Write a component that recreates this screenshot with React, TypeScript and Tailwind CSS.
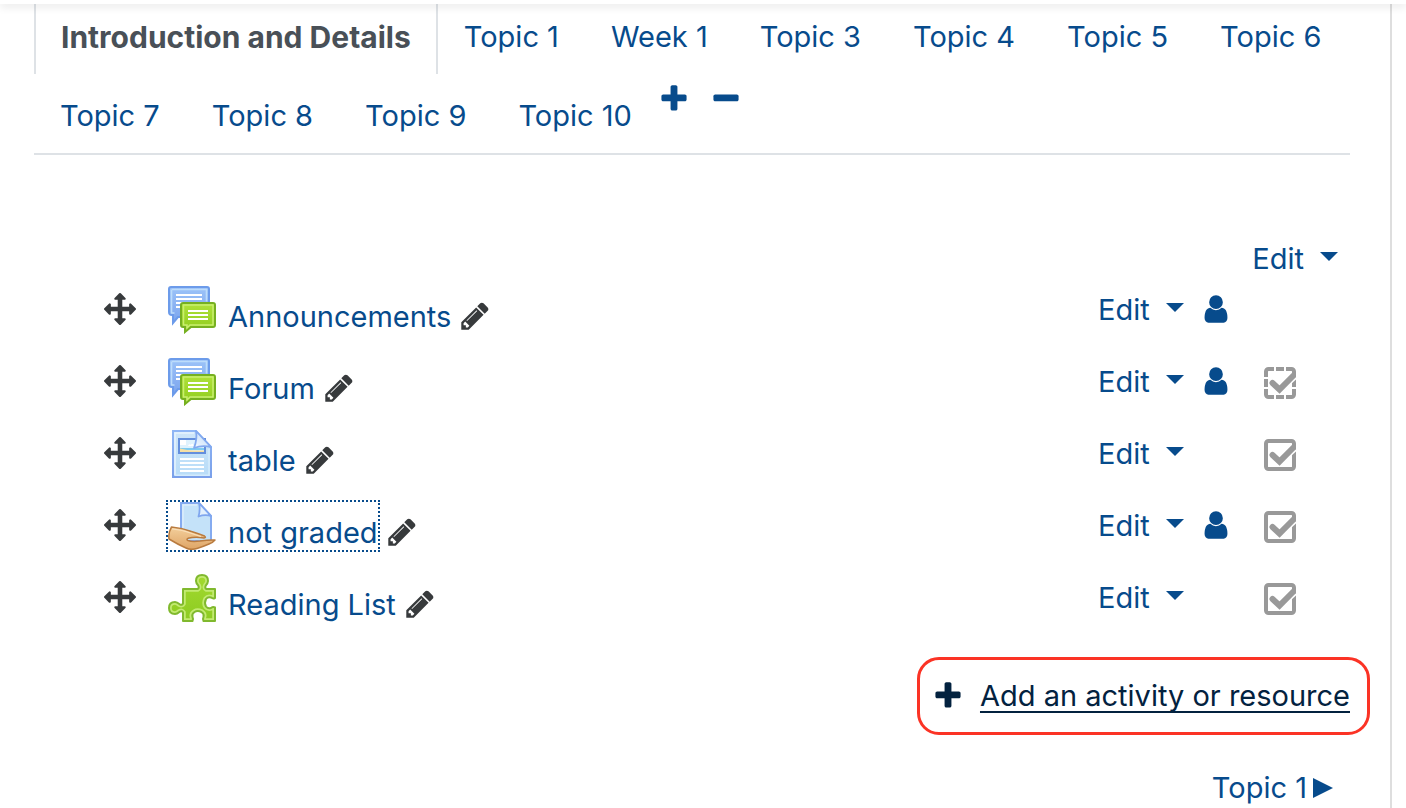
import React from 'react';

const PATHS = {
  plus: 'M1600 736v192q0 40-28 68t-68 28h-416v416q0 40-28 68t-68 28h-192q-40 0-68-28t-28-68v-416h-416q-40 0-68-28t-28-68v-192q0-40 28-68t68-28h416v-416q0-40 28-68t68-28h192q40 0 68 28t28 68v416h416q40 0 68 28t28 68z',
  minus: 'M1600 736v192q0 40-28 68t-68 28h-1216q-40 0-68-28t-28-68v-192q0-40 28-68t68-28h1216q40 0 68 28t28 68z',
  user: 'M1536 1399q0 109-62.5 187t-150.5 78h-854q-88 0-150.5-78t-62.5-187q0-85 8.5-160.5t31.5-152 58.5-131 94-89 134.5-34.5q131 128 313 128t313-128q76 0 134.5 34.5t94 89 58.5 131 31.5 152 8.5 160.5zm-256-887q0 159-112.5 271.5t-271.5 112.5-271.5-112.5-112.5-271.5 112.5-271.5 271.5-112.5 271.5 112.5 112.5 271.5z',
  pencil: 'M491 1536l91-91-235-235-91 91v107h128v128h107zm523-928q0-22-22-22-10 0-17 7l-542 542q-7 7-7 17 0 22 22 22 10 0 17-7l542-542q7-7 7-17zm-54-192l416 416-832 832h-416v-416zm683 96q0 53-37 90l-166 166-416-416 166-165q36-38 90-38 53 0 91 38l235 234q37 39 37 91z',
  move: 'M1792 896q0 26-19 45l-256 256q-19 19-45 19t-45-19-19-45v-128h-384v384h128q26 0 45 19t19 45-19 45l-256 256q-19 19-45 19t-45-19l-256-256q-19-19-19-45t19-45 45-19h128v-384h-384v128q0 26-19 45t-45 19-45-19l-256-256q-19-19-19-45t19-45l256-256q19-19 45-19t45 19 19 45v128h384v-384h-128q-26 0-45-19t-19-45 19-45l256-256q19-19 45-19t45 19l256 256q19 19 19 45t-19 45-45 19h-128v384h384v-128q0-26 19-45t45-19 45 19l256 256q19 19 19 45z',
};

function Icon({ name }: { name: keyof typeof PATHS }) {
  return (
    <svg viewBox="0 0 1792 1792" className="block size-8 shrink-0 fill-current" aria-hidden="true">
      <path d={PATHS[name]} />
    </svg>
  );
}

function ForumIcon() {
  return (
    <svg viewBox="0 0 48 48" className="block size-12 shrink-0" aria-hidden="true">
      <defs>
        <linearGradient id="forum-blue" x1="0" y1="0" x2="0" y2="1">
          <stop offset="0" stopColor="#9cc3f8" />
          <stop offset="1" stopColor="#7ba4ee" />
        </linearGradient>
        <linearGradient id="forum-green" x1="0" y1="0" x2="0" y2="1">
          <stop offset="0" stopColor="#b0e23a" />
          <stop offset="1" stopColor="#8ecb1c" />
        </linearGradient>
      </defs>
      <path d="M3 1h36q2 0 2 2v26q0 2-2 2H10l-5 6v-8H4q-3 0-3-3V3q0-2 2-2z" fill="url(#forum-blue)" stroke="#6c9bea" strokeWidth="2" />
      <path d="M4 3.500h34.500v12M3.500 3.500v23.500h3" fill="none" stroke="#bcdcfb" strokeWidth="1.600" />
      <path d="M8 9h26M8 13h26M8 17h26M8 21h26" stroke="#fff" strokeWidth="2" />
      <path d="M15 17h30q2 0 2 2v20q0 2-2 2H23l-6 5v-5h-2q-2 0-2-2V19q0-2 2-2z" fill="url(#forum-green)" stroke="#76b020" strokeWidth="2" />
      <path d="M15.500 19h29.500v20h-23l-3 3v-3h-3.500z" fill="none" stroke="#c9ee70" strokeWidth="1.500" />
      <path d="M20 25h20M20 29h20M20 33h20" stroke="#fff" strokeWidth="2" />
    </svg>
  );
}

function PageIcon() {
  return (
    <svg viewBox="0 0 48 48" className="block size-12 shrink-0" aria-hidden="true">
      <defs>
        <linearGradient id="page-fill" x1="0" y1="0" x2="0" y2="1">
          <stop offset="0" stopColor="#cfe6f9" />
          <stop offset="1" stopColor="#b7dcf8" />
        </linearGradient>
        <linearGradient id="page-edge" x1="0" y1="0" x2="0" y2="1">
          <stop offset="0" stopColor="#8fb6f5" />
          <stop offset="1" stopColor="#7aa0ea" />
        </linearGradient>
        <linearGradient id="page-fold" x1="0" y1="1" x2="1" y2="0">
          <stop offset="0" stopColor="#f4faff" />
          <stop offset="1" stopColor="#b9d6f8" />
        </linearGradient>
      </defs>
      <path d="M5 1h23l15 16v30H5z" fill="url(#page-fill)" stroke="url(#page-edge)" strokeWidth="2" />
      <path d="M7 45V3h19" fill="none" stroke="#e6f4fe" strokeWidth="1.500" />
      <path d="M7 45.300h34V19" fill="none" stroke="#d3ebfc" strokeWidth="1.500" />
      <rect x="11" y="9" width="26" height="14" fill="#dff2fd" stroke="#648fdd" strokeWidth="2" />
      <path d="M12 10h6v5h-6z" fill="#fff" />
      <path d="M20 16q1-3 3-1 1-3 3 1z" fill="#fff" />
      <path d="M12 18h24v2H12z" fill="#7fcbf0" />
      <path d="M12 18.500q9 2.500 16 2h8V22H12z" fill="#f6dfa4" />
      <path d="M28 1l15 16q-9-2-17 1 3.500-9 2-17z" fill="url(#page-fold)" stroke="#82a9ef" strokeWidth="1.800" strokeLinejoin="round" />
      <path d="M12 29h24M12 33h24M12 37h24M12 41h24" stroke="#fff" strokeWidth="2" />
    </svg>
  );
}

function AssignIcon() {
  return (
    <svg viewBox="0 0 48 48" className="block size-12 shrink-0" aria-hidden="true">
      <defs>
        <linearGradient id="assign-hand" x1="0" y1="0" x2="0" y2="1">
          <stop offset="0" stopColor="#f3cf9c" />
          <stop offset="1" stopColor="#dfa566" />
        </linearGradient>
      </defs>
      <path d="M13 1h18l12 13v25H13z" fill="#c4e2f9" stroke="#85abf0" strokeWidth="2" />
      <path d="M15 37V3h14" fill="none" stroke="#dcedfc" strokeWidth="1.500" />
      <path d="M31 1l12 13q-6-2-12.500.500 2-7 .500-13.500z" fill="#e3f0fd" stroke="#7fa6ee" strokeWidth="1.800" strokeLinejoin="round" />
      <path
        d="M3.500 25q11 1 20 4.500 8 2.500 13 4.500 2 1.500-.500 2-9-1.500-16 .300-2 1.200 0 2.200 4 1.500 12 .500 8-1.200 15-1-2 2.500-6 4-7 3-12 4.500-6 1.800-11-.500-8-3.500-17-9Q0 31 3.500 25z"
        fill="url(#assign-hand)"
        stroke="#b97b3f"
        strokeWidth="1.500"
        strokeLinejoin="round"
      />
      <path d="M4 27q10 1 17 3.500 7 2.500 12 4" fill="none" stroke="#fae1bb" strokeWidth="1.200" />
    </svg>
  );
}

function PuzzleIcon() {
  const outline =
    'M15 15h14.500q2-1 .800-3.300Q28 9 28 7q0-6 6-6t6 6q0 2-2.300 4.700Q36.500 14 38.500 15H47v9q-2 1-4-.500-3-1-5 1.500-2 4 0 7.500 2 2.500 5 1.500 2-1.500 4-.500V47H35.500q-1-2 0-4 1-3-2-5-4-2-7 0-3 2-2 5 1 2 0 4H15v-8.500q-1-2-3.300-.800Q9 40 7 40q-6 0-6-6t6-6q2 0 4.700 2.300 2.300 1.200 3.300-.800z';
  return (
    <svg viewBox="0 0 48 48" className="block size-12 shrink-0" aria-hidden="true">
      <defs>
        <linearGradient id="puzzle-fill" x1="0" y1="0" x2="0" y2="1">
          <stop offset="0" stopColor="#a3da2e" />
          <stop offset="1" stopColor="#8ccb22" />
        </linearGradient>
        <clipPath id="puzzle-clip">
          <path d={outline} />
        </clipPath>
      </defs>
      <path d={outline} fill="url(#puzzle-fill)" />
      <path d={outline} fill="none" stroke="#c3ea72" strokeWidth="5.500" clipPath="url(#puzzle-clip)" />
      <path d={outline} fill="none" stroke="#80b92e" strokeWidth="2" strokeLinejoin="round" />
    </svg>
  );
}

function CompletionBox({ dashed, label }: { dashed: boolean; label: string }) {
  return (
    <button type="button" aria-label={label} className="block">
      <svg viewBox="0 0 32 32" className="block size-8" aria-hidden="true">
        <rect x="2" y="2" width="28" height="28" rx="2.500" fill="none" stroke="#999" strokeWidth="4" />
        {dashed && (
          <path d="M11 0v4M21 0v4M11 28v4M21 28v4M0 11h4M0 21h4M28 11h4M28 21h4" stroke="#fff" strokeWidth="2" />
        )}
        <path d="M15.500 22L30 8.500" fill="none" stroke="#fff" strokeWidth="8.500" />
        <path d="M8.500 16l7 6.500L29.500 8.500" fill="none" stroke="#999" strokeWidth="6" strokeLinecap="round" />
      </svg>
    </button>
  );
}

function EditMenu() {
  return (
    <button type="button" className="flex items-center gap-4">
      <span>Edit</span>
      <svg viewBox="0 0 18 9" className="mb-1.5 block h-[9px] w-[18px] fill-current" aria-hidden="true">
        <path d="M0 0h18L9 9z" />
      </svg>
    </button>
  );
}

const TOPICS = ['Topic 1', 'Week 1', 'Topic 3', 'Topic 4', 'Topic 5', 'Topic 6', 'Topic 7', 'Topic 8', 'Topic 9', 'Topic 10'];

type Activity = {
  name: string;
  icon: () => React.ReactElement;
  groups?: boolean;
  completion?: 'manual' | 'auto';
  focused?: boolean;
};

const ACTIVITIES: Activity[] = [
  { name: 'Announcements', icon: ForumIcon, groups: true },
  { name: 'Forum', icon: ForumIcon, groups: true, completion: 'auto' },
  { name: 'table', icon: PageIcon, completion: 'manual' },
  { name: 'not graded', icon: AssignIcon, groups: true, completion: 'manual', focused: true },
  { name: 'Reading List', icon: PuzzleIcon, completion: 'manual' },
];

function ActivityRow({ activity }: { activity: Activity }) {
  const ModIcon = activity.icon;
  return (
    <li className="flex h-[72px] items-start">
      <button type="button" aria-label={`Move ${activity.name}`} className="mt-2 text-[#373a3c]">
        <Icon name="move" />
      </button>
      <a
        href="#activity"
        className={
          activity.focused
            ? 'ml-[30px] flex h-[52px] -mt-px border-2 border-dotted border-[#074b8c]'
            : 'ml-[30px] flex h-[52px] -mt-px border-2 border-transparent'
        }
      >
        <ModIcon />
        <span className="ml-3 mt-3">{activity.name}</span>
      </a>
      <button type="button" aria-label={`Edit title of ${activity.name}`} className="ml-1.5 mt-[15px] text-[#373a3c]">
        <Icon name="pencil" />
      </button>
      <div className="ml-auto grid grid-cols-[102px_64px_32px] pt-1.5">
        <EditMenu />
        <div className="mt-0.5">
          {activity.groups && (
            <button type="button" aria-label="Separate groups" className="block">
              <Icon name="user" />
            </button>
          )}
        </div>
        <div className="mt-1">
          {activity.completion && (
            <CompletionBox dashed={activity.completion === 'auto'} label={`Completion of ${activity.name}`} />
          )}
        </div>
      </div>
    </li>
  );
}

export default function App() {
  return (
    <div className="min-h-screen overflow-hidden bg-white font-['Inter',sans-serif] text-[29px] leading-[38px] text-[#074b8c]">
      <header className="relative z-10 h-1 bg-white shadow-[0_2px_8px_rgba(0,0,0,0.15)]" />
      <main className="-mt-[5px] mr-3.5 min-h-screen border-r-2 border-[#dedede] pb-2 pl-[34px] pr-10">
        <ul className="flex flex-wrap items-start gap-y-1 border-b-2 border-[#dee2e6]">
          <li>
            <a href="#intro" className="flex h-[75px] items-center border-x-2 border-[#dee2e6] px-[25px] text-[30px] font-bold text-[#495057]">
              Introduction and Details
            </a>
          </li>
          {TOPICS.map((topic) => (
            <li key={topic}>
              <a href="#topic" className="flex h-[75px] items-center px-[26px]">
                {topic}
              </a>
            </li>
          ))}
          <li className="flex gap-5 pt-[5px]">
            <button type="button" aria-label="Increase the number of sections">
              <Icon name="plus" />
            </button>
            <button type="button" aria-label="Reduce the number of sections">
              <Icon name="minus" />
            </button>
          </li>
        </ul>
        <div className="mt-[85px] flex justify-end pr-3">
          <EditMenu />
        </div>
        <ul className="mt-[7px] pl-[70px] pr-[54px]">
          {ACTIVITIES.map((activity) => (
            <ActivityRow key={activity.name} activity={activity} />
          ))}
        </ul>
        <div className="-mr-5 mt-3 flex justify-end">
          <a href="#add" className="flex h-[78px] items-center gap-4 rounded-[22px] border-[3px] border-[#fb3325] pl-3 pr-[17px] text-[#03223f]">
            <Icon name="plus" />
            <span className="underline decoration-2 underline-offset-[5px] [text-decoration-skip-ink:none]">Add an activity or resource</span>
          </a>
        </div>
        <nav className="mt-[34px] flex justify-end pr-[17px]">
          <a href="#next" className="flex items-center gap-1.5">
            Topic 1
            <svg viewBox="0 0 20 20" className="block size-5 fill-current" aria-hidden="true">
              <path d="M0 0l20 10L0 20z" />
            </svg>
          </a>
        </nav>
      </main>
    </div>
  );
}
